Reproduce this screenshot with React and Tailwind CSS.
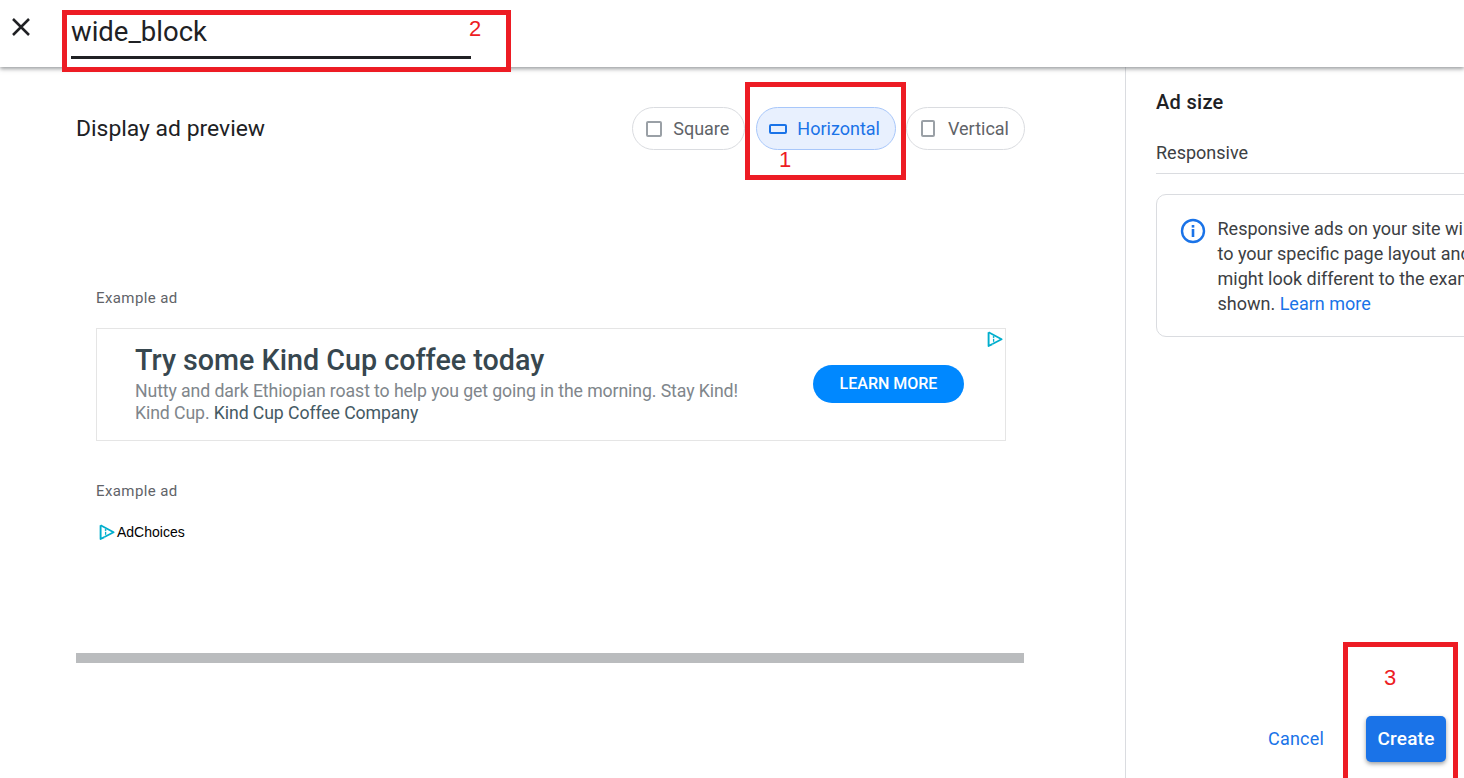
const AdChoicesIcon = ({ className = "" }) => (
  <svg viewBox="0 0 16 16" className={className} fill="none">
    <path d="M1.6 1.2 L14.6 8.2 L5.4 13" stroke="#00aecd" strokeWidth="1.8" strokeLinejoin="round" />
    <path d="M1.6 1.2 V15 L5.4 13.2" stroke="#00aecd" strokeWidth="1.9" strokeLinejoin="round" />
    <circle cx="6.6" cy="6" r="0.9" fill="#00aecd" />
    <path d="M6.6 7.8 V10.8" stroke="#00aecd" strokeWidth="1.3" />
  </svg>
);

const SizeChip = ({ label, active, icon, className = "" }) => (
  <div
    className={`h-[43px] flex items-center rounded-full border text-[18px] pr-[15px] ${
      active
        ? "bg-[#e8f0fe] border-[#a8c7fa] text-[#1a73e8]"
        : "bg-white border-[#dadce0] text-[#5f6368]"
    } ${className}`}
  >
    {icon}
    <span>{label}</span>
  </div>
);

const Marker = ({ className, number, numberClass }) => (
  <div className={`absolute border-[5px] border-[#ed1c24] ${className}`}>
    <span className={`absolute text-[#ed1c24] text-[22px] leading-none font-['Liberation_Sans',sans-serif] ${numberClass}`}>
      {number}
    </span>
  </div>
);

const ExampleLabel = ({ children }) => (
  <div className="text-[15px] leading-[20px] tracking-[0.4px] text-[#5f6368]">{children}</div>
);

export default function App() {
  return (
    <div className="relative w-[1464px] h-[778px] overflow-hidden bg-white font-['Roboto',sans-serif]">
      {/* Top bar */}
      <header className="relative z-10 h-[67px] flex items-start bg-white shadow-[0_2px_4px_rgba(60,64,67,0.5)]">
        <button className="w-[71px] shrink-0 pl-[11px] pt-[17px] text-[#202124]">
          <svg viewBox="0 0 20 20" className="w-[20px] h-[20px]" fill="none" stroke="currentColor" strokeWidth="2.5">
            <path d="M2 2 L18 18 M18 2 L2 18" />
          </svg>
        </button>
        <div className="w-[400px] h-[59px] border-b-[3px] border-[#202124] pt-[14px] text-[27.5px] leading-[36px] text-[#202124]">
          wide_block
        </div>
      </header>

      <div className="flex h-[711px]">
        {/* Preview column */}
        <main className="w-[1125px] shrink-0 border-r border-[#dadce0] box-content">
          <div className="w-[949px] ml-[76px] pt-[40px]">
            <div className="flex items-center justify-between">
              <h2 className="text-[22.9px] leading-[43px] text-[#202124]">Display ad preview</h2>
              <div className="flex gap-[10px]">
                <SizeChip
                  label="Square"
                  className="pl-[13px] gap-[11px] mr-[1px]"
                  icon={<span className="w-[16px] h-[16px] border-2 border-[#9aa0a6] rounded-[2px]" />}
                />
                <SizeChip
                  label="Horizontal"
                  active
                  className="pl-[12px] gap-[10px]"
                  icon={<span className="w-[18px] h-[10px] border-2 border-[#1a73e8] rounded-[2px]" />}
                />
                <SizeChip
                  label="Vertical"
                  className="pl-[14px] gap-[13px]"
                  icon={<span className="w-[14px] h-[17px] border-2 border-[#9aa0a6] rounded-[2px]" />}
                />
              </div>
            </div>

            <div className="ml-[20px] mt-[138px]">
              <ExampleLabel>Example ad</ExampleLabel>
              <div className="relative mt-[20px] w-[910px] h-[113px] border border-[#e5e5e5] flex items-center pl-[38px] pr-[41px]">
                <AdChoicesIcon className="absolute top-[2px] right-[2px] w-[16px] h-[16px]" />
                <div className="flex-1">
                  <div className="text-[28.7px] leading-[30px] font-medium text-[#37474f]">
                    Try some Kind Cup coffee today
                  </div>
                  <div className="mt-[5px] text-[17.7px] leading-[22px] text-[#80868b] tracking-[-0.1px]">
                    Nutty and dark Ethiopian roast to help you get going in the morning. Stay Kind!
                    <br />
                    Kind Cup. <span className="text-[#455a64]">Kind Cup Coffee Company</span>
                  </div>
                </div>
                <div className="w-[151px] h-[38px] mb-[2px] rounded-full bg-[#0088ff] text-white text-[16px] font-medium flex items-center justify-center">
                  LEARN MORE
                </div>
              </div>

              <div className="mt-[40px]">
                <ExampleLabel>Example ad</ExampleLabel>
              </div>
              <div className="mt-[21px] ml-[3px] flex items-center h-[20px]">
                <AdChoicesIcon className="w-[16px] h-[16px] shrink-0" />
                <span className="ml-[2px] text-[14px] text-black font-['Liberation_Sans',sans-serif]">AdChoices</span>
              </div>
            </div>

            <div className="mt-[111px] w-[948px] h-[10px] bg-[#babcbe]" />
          </div>
        </main>

        {/* Settings column */}
        <aside className="relative flex-1 pl-[30px] pt-[23px]">
          <h3 className="text-[20px] leading-[24px] font-medium tracking-[0.3px] text-[#202124]">Ad size</h3>
          <div className="mt-[27px] pb-[8px] border-b border-[#dadce0] text-[18px] leading-[24px] text-[#3c4043] whitespace-nowrap">
            Responsive
          </div>
          <div className="mt-[20px] w-[360px] h-[143px] flex border border-[#dadce0] rounded-[10px] pl-[23px] pt-[21px]">
            <svg viewBox="0 0 26 26" className="w-[26px] h-[26px] mt-[2px] shrink-0" fill="none">
              <circle cx="13" cy="13" r="11" stroke="#1a73e8" strokeWidth="2.4" />
              <rect x="11.7" y="11" width="2.6" height="8" fill="#1a73e8" />
              <rect x="11.7" y="7" width="2.6" height="2.6" fill="#1a73e8" />
            </svg>
            <p className="ml-[11.5px] text-[18px] leading-[25px] text-[#3c4043] whitespace-nowrap">
              Responsive ads on your site will adapt
              <br />
              to your specific page layout and
              <br />
              might look different to the examples
              <br />
              shown. <span className="text-[#1a73e8]">Learn more</span>
            </p>
          </div>

          <div className="absolute left-[142px] top-[649px] flex items-center gap-[42px]">
            <button className="text-[18px] tracking-[0.2px] text-[#1a73e8] mb-[2px]">Cancel</button>
            <button className="w-[80px] h-[46px] rounded-[5px] bg-[#1a73e8] text-white text-[19px] font-medium tracking-[0.2px] shadow-[0_2px_4px_rgba(60,64,67,0.5)]">
              Create
            </button>
          </div>
        </aside>
      </div>

      {/* Red annotation boxes */}
      <Marker className="z-20 left-[62px] top-[10px] w-[449px] h-[62px]" number="2" numberClass="left-[402px] top-[3px]" />
      <Marker className="z-20 left-[745px] top-[82px] w-[161px] h-[98px]" number="1" numberClass="left-[29px] top-[62px]" />
      <Marker className="z-20 left-[1343px] top-[642px] w-[115px] h-[145px]" number="3" numberClass="left-[36px] top-[20px]" />
    </div>
  );
}
